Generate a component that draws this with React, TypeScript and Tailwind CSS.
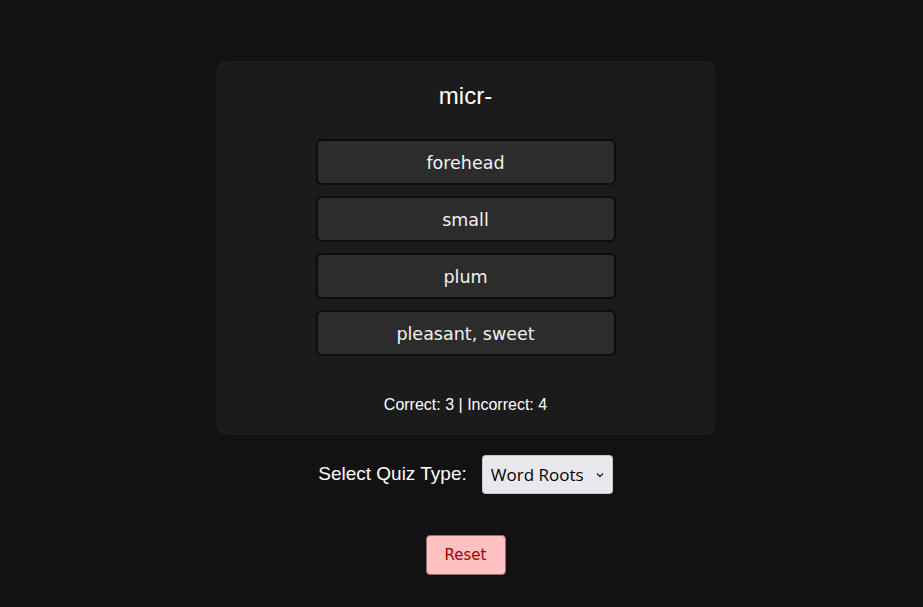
import React, { useState } from 'react';

const CHOICES = ['forehead', 'small', 'plum', 'pleasant, sweet'];

export default function App() {
  const [quizType, setQuizType] = useState('roots');
  const [score] = useState({ correct: 3, incorrect: 4 });

  return (
    <div className="min-h-screen bg-[#121212] flex flex-col items-center pt-[61px] pl-2 font-['Liberation_Sans',Arial,sans-serif] text-white">
      {/* Quiz card */}
      <div className="w-[500px] bg-[#1b1b1b] rounded-[10px] pt-[21px] pb-[21px] flex flex-col items-center">
        <h2 className="text-[24px] leading-[28px]">micr-</h2>
        <div className="mt-[29px] flex flex-col gap-[11px]">
          {CHOICES.map((c) => (
            <button
              key={c}
              className="w-[300px] h-[46px] pt-[3px] bg-[#2c2c2c] border-2 border-[#0c0c0c] rounded-[6px] text-[17.5px] text-[#f2f2f2] font-['DejaVu_Sans',Tahoma,sans-serif]"
            >
              {c}
            </button>
          ))}
        </div>
        <p className="mt-10 text-[16px] leading-[18px]">
          Correct: {score.correct} | Incorrect: {score.incorrect}
        </p>
      </div>

      {/* Quiz type selector */}
      <div className="mt-5 flex items-center gap-[15px]">
        <label className="text-[19px]">Select Quiz Type:</label>
        <div className="relative">
          <select
            value={quizType}
            onChange={(e) => setQuizType(e.target.value)}
            className="appearance-none w-[131px] h-[39px] pl-2 bg-[#e9e9ed] text-black rounded-[4px] border border-[#8f8f9d]/40 text-[17px] font-['Open_Sans',sans-serif] outline-none"
          >
            <option value="roots">Word Roots</option>
            <option value="words">Words</option>
          </select>
          <svg className="absolute right-[9px] top-[17px] pointer-events-none" width="8" height="6" viewBox="0 0 8 6">
            <path d="M1 1.5 L4 4.5 L7 1.5" fill="none" stroke="#222" strokeWidth="1.3" />
          </svg>
        </div>
      </div>

      <button className="mt-[41px] w-[80px] h-[40px] bg-[#ffc1c1] border border-[#9a6a6a] rounded-[4px] text-[#a00000] text-[15px] font-['DejaVu_Sans',Tahoma,sans-serif]">
        Reset
      </button>
    </div>
  );
}
